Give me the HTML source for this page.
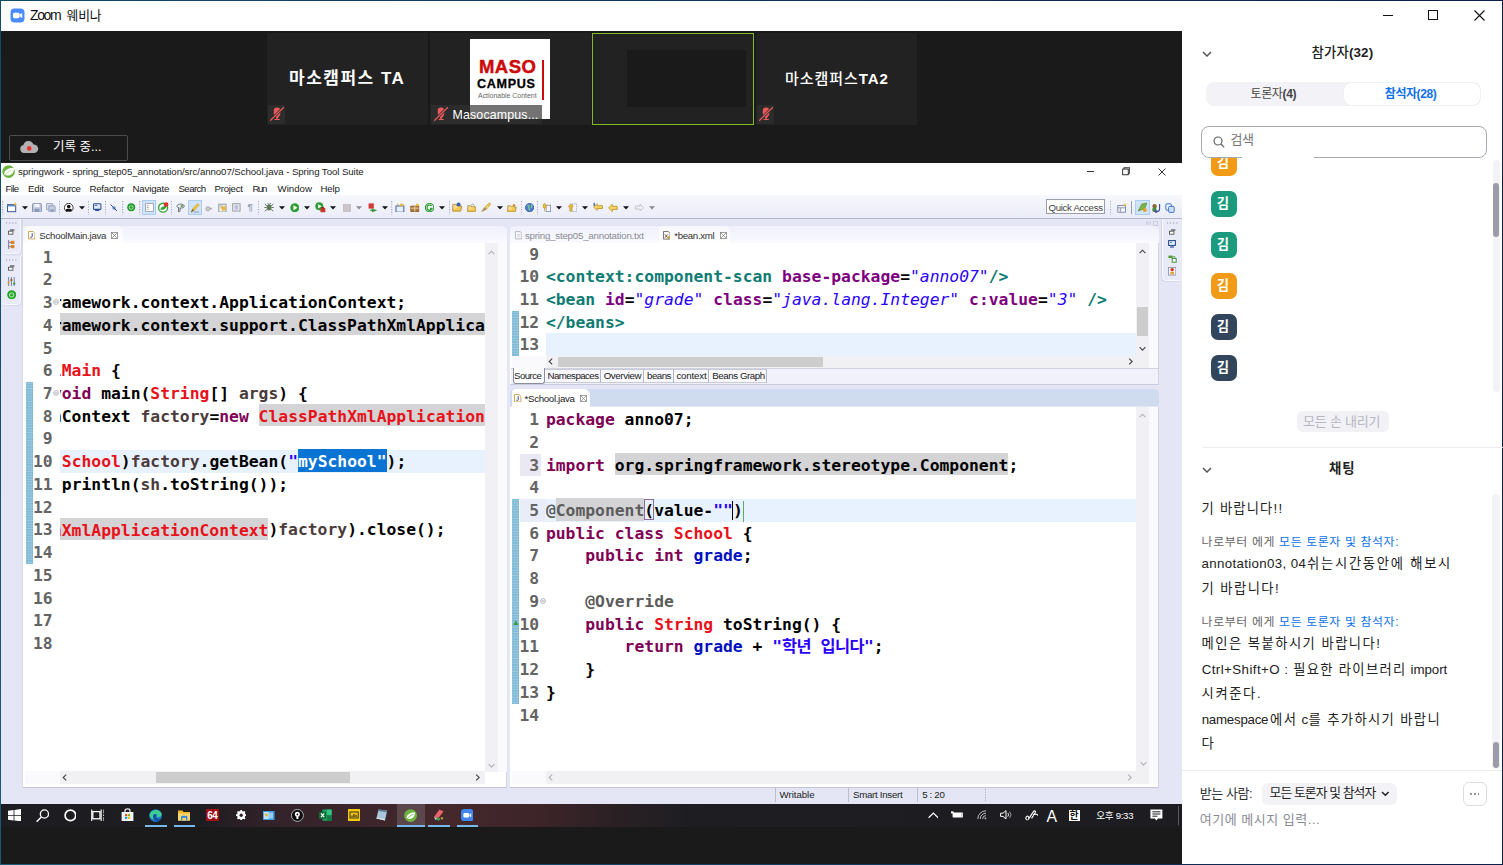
<!DOCTYPE html>
<html lang="ko">
<head>
<meta charset="utf-8">
<title>Zoom 웨비나</title>
<style>
*{box-sizing:border-box;margin:0;padding:0}
html,body{width:1503px;height:865px;overflow:hidden;background:#1a1a1a}
body{position:relative;font-family:"Liberation Sans","Noto Sans CJK KR",sans-serif;font-size:12px;color:#000}
.a{position:absolute}
.t{position:absolute;white-space:nowrap;line-height:1}
#titlebar{left:1px;top:1px;width:1501px;height:30px;background:#fff}
#strip{left:1px;top:31px;width:1181px;height:132px;background:#1a1a1a}
.tile{position:absolute;top:2px;height:92px;background:#222}
.tname{position:absolute;white-space:nowrap;color:#fff;font-weight:bold;line-height:1}
.ui{font-family:"Liberation Sans","Noto Sans CJK KR",sans-serif}
.code{font-family:"DejaVu Sans Mono","Liberation Mono","Noto Sans CJK KR",monospace;font-weight:bold;font-size:16.35px;white-space:pre;line-height:22.75px;position:absolute}
.ln{color:#646464}
.kw{color:#7f0055}
.rd{color:#e8111a}
.br{color:#4a3a3a}
.bl{color:#0010c0}
.st{color:#2a00ff}
.tg{color:#0e7c72}
.sti{color:#2a00ff;font-style:italic;font-weight:normal}
.bx{outline:1px solid #8a6a9a;outline-offset:-1px;padding:1.8px 0 0.2px}
.cur{box-shadow:-1px 0 0 #000}
.grn{display:inline-block;width:1px;height:21px;background:#5daa60;vertical-align:top;margin-top:1px}
.at{color:#7f007f}
.gy{color:#5c5c5c}
.ko{letter-spacing:-0.52px}
.hl{background:#d4d4d6;padding:2.8px 0 0.7px}
.selx{background:#0a74d4;color:#fff;padding:2.8px 0 0.7px}
</style>
</head>
<body>
<!-- outer frame -->
<div class="a" style="left:0;top:0;width:1503px;height:1px;background:linear-gradient(90deg,#134a66,#0b1f4a)"></div>
<div class="a" style="left:0;top:864px;width:1503px;height:1px;background:linear-gradient(90deg,#1b5b78,#0b1f4a)"></div>
<div class="a" style="left:0;top:0;width:1px;height:865px;background:linear-gradient(#134a66,#1b5b78)"></div>
<div class="a" style="left:1502px;top:0;width:1px;height:865px;background:#0b1f4a"></div>

<!-- ZOOM TITLE BAR -->
<div id="titlebar" class="a">
  <svg class="a" style="left:9px;top:7px" width="15" height="15" viewBox="0 0 15 15"><rect x="0.5" y="0.5" width="14" height="14" rx="4" fill="#4a8cff"/><rect x="3" y="4.8" width="6.6" height="5.4" rx="1.4" fill="#fff"/><path d="M9.9 6.6 L12.2 5.1 V9.9 L9.9 8.4Z" fill="#fff"/></svg>
  <div class="t" style="left:29px;top:7.2px;font-size:14px;color:#111;letter-spacing:-1.40px;">Zoom</div>
  <div class="t" style="left:65.6px;top:9.2px;font-size:12.8px;color:#111;letter-spacing:-0.16px;">웨비나</div>
  <div class="a" style="left:1382px;top:14px;width:10px;height:1px;background:#111"></div>
  <div class="a" style="left:1427px;top:9px;width:10px;height:10px;border:1px solid #111"></div>
  <svg class="a" style="left:1473px;top:9px" width="11" height="11" viewBox="0 0 11 11"><path d="M0.5 0.5 L10.5 10.5 M10.5 0.5 L0.5 10.5" stroke="#111" stroke-width="1.1" fill="none"/></svg>
</div>

<!-- VIDEO STRIP -->
<div id="strip" class="a">
  <div class="tile" style="left:266px;width:161px"><div class="tname" id="ta1" style="left:22px;top:37px;font-size:17px;letter-spacing:1.5px">마소캠퍼스 TA</div>
    <div class="a" style="left:1px;top:72px;width:17px;height:19px;background:#2c2c2c"></div><svg class="a" style="left:3px;top:73px" width="14" height="15" viewBox="0 0 14 15"><rect x="3.8" y="1.6" width="6.5" height="9" rx="3.2" fill="#ee5a5a"/><path d="M5 9.6 H9.2 L7.8 12.8 H6.3Z" fill="#ee5a5a"/><rect x="4.4" y="13" width="5.5" height="1.1" rx="0.5" fill="#ee5a5a"/><path d="M13.6 1.4 L0.5 14.4" stroke="#2c2c2c" stroke-width="2.8"/><path d="M13.9 1.1 L0.2 14.7" stroke="#ee5a5a" stroke-width="1.3"/></svg></div>
  <div class="tile" style="left:429px;width:161px">
    <div class="a" style="left:40px;top:6px;width:80px;height:80px;background:#fff">
      <div class="t" id="maso" style="-webkit-text-stroke:0.45px #cc0a0a;left:9px;top:19.3px;font-size:18.5px;font-weight:bold;color:#cc0a0a;letter-spacing:0.45px">MASO</div>
      <div class="t" id="campus" style="-webkit-text-stroke:0.3px #000;left:7px;top:39px;font-size:12.6px;font-weight:bold;color:#000;letter-spacing:0.65px">CAMPUS</div>
      <div class="t" id="actc" style="left:8px;top:54px;font-size:6.95px;color:#666">Actionable Content</div>
      <div class="a" style="left:72px;top:21px;width:2px;height:40px;background:#cc0a0a"></div>
    </div>
    <div class="a" style="left:1px;top:72px;width:39px;height:19px;background:#2c2c2c"></div>
    <div class="a" style="left:40px;top:72px;width:72px;height:14px;background:#737373"></div>
    <div class="a" style="left:40px;top:86px;width:72px;height:5px;background:#2c2c2c"></div><svg class="a" style="left:4px;top:73px" width="14" height="15" viewBox="0 0 14 15"><rect x="3.8" y="1.6" width="6.5" height="9" rx="3.2" fill="#ee5a5a"/><path d="M5 9.6 H9.2 L7.8 12.8 H6.3Z" fill="#ee5a5a"/><rect x="4.4" y="13" width="5.5" height="1.1" rx="0.5" fill="#ee5a5a"/><path d="M13.6 1.4 L0.5 14.4" stroke="#2c2c2c" stroke-width="2.8"/><path d="M13.9 1.1 L0.2 14.7" stroke="#ee5a5a" stroke-width="1.3"/></svg>
    <div class="t" id="masoc" style="left:22.5px;top:75.5px;font-size:12.4px;letter-spacing:0.15px;color:#fff">Masocampus...</div>
  </div>
  <div class="tile" style="left:591px;width:162px;border:1px solid #84b822"><div class="a" style="left:34px;top:16px;width:119px;height:57px;background:#1a1a1a"></div></div>
  <div class="tile" style="left:755px;width:161px"><div class="tname" id="ta2" style="left:29px;top:37.8px;font-size:15px;letter-spacing:0.95px"><span style="font-weight:500">마소캠퍼스</span>TA2</div>
    <div class="a" style="left:1px;top:72px;width:17px;height:19px;background:#2c2c2c"></div><svg class="a" style="left:3px;top:73px" width="14" height="15" viewBox="0 0 14 15"><rect x="3.8" y="1.6" width="6.5" height="9" rx="3.2" fill="#ee5a5a"/><path d="M5 9.6 H9.2 L7.8 12.8 H6.3Z" fill="#ee5a5a"/><rect x="4.4" y="13" width="5.5" height="1.1" rx="0.5" fill="#ee5a5a"/><path d="M13.6 1.4 L0.5 14.4" stroke="#2c2c2c" stroke-width="2.8"/><path d="M13.9 1.1 L0.2 14.7" stroke="#ee5a5a" stroke-width="1.3"/></svg></div>
  <div class="a" style="left:8px;top:104px;width:119px;height:26px;border:1px solid #4c4c4c;border-radius:2px">
    <svg class="a" style="left:9px;top:4px" width="20" height="14" viewBox="0 0 20 14"><path d="M5 13 a4 4 0 0 1 -.6 -7.9 a5.2 5.2 0 0 1 10 -0.6 a4.2 4.2 0 0 1 1 8.5z" fill="#b2b2b2"/><circle cx="10.2" cy="8.4" r="2.3" fill="#f0302c"/></svg>
    <div class="t" style="left:43px;top:5px;font-size:12.5px;color:#fff">기록 중...</div>
  </div>
</div>

<!-- ECLIPSE -->
<!--ECL-START-->
<div id="ecl" class="a" style="left:0;top:0;width:1182px;height:804px;overflow:hidden">
<div class="a" style="left:1px;top:163px;width:1181px;height:641px;background:#e4e6f6"></div>
<div class="a" style="left:1px;top:163px;width:1181px;height:32px;background:#fff"></div>
<svg class="a" style="left:1.8px;top:164.8px" width="13.2" height="13.2" viewBox="0 0 14 14"><circle cx="7" cy="7" r="6.7" fill="#6cb33e"/><path d="M2.4 10 C2 5.2 6.4 3.2 12.6 2.8 C13.4 8.4 9.4 12 3.8 11 Z" fill="#fff"/><path d="M2.8 11.2 C4.6 8.6 7 6.8 10.2 5.4" stroke="#9fd07c" stroke-width="0.7" fill="none"/></svg>
<div class="t" style="left:18px;top:167.2px;font-size:9.7px;color:#222;letter-spacing:-0.08px;">springwork - spring_step05_annotation/src/anno07/School.java - Spring Tool Suite</div>
<div class="a" style="left:1086.6px;top:171px;width:7.6px;height:1px;background:#333"></div>
<svg class="a" style="left:1121.6px;top:167.4px" width="8.4" height="8.4" viewBox="0 0 10 10"><path d="M2.5 2.5 V0.8 H9.2 V7.5 H7.5" fill="none" stroke="#333" stroke-width="1.2"/><rect x="0.8" y="2.5" width="6.7" height="6.7" fill="none" stroke="#333" stroke-width="1.2"/></svg>
<svg class="a" style="left:1158.4px;top:167.6px" width="8" height="8" viewBox="0 0 10 10"><path d="M0.7 0.7 L9.3 9.3 M9.3 0.7 L0.7 9.3" stroke="#333" stroke-width="1.25" fill="none"/></svg>
<div class="t" style="left:5.5px;top:184.3px;font-size:9.7px;color:#1a1a1a;letter-spacing:-0.64px;">File</div>
<div class="t" style="left:28px;top:184.3px;font-size:9.7px;color:#1a1a1a;letter-spacing:-0.23px;">Edit</div>
<div class="t" style="left:52.5px;top:184.3px;font-size:9.7px;color:#1a1a1a;letter-spacing:-0.44px;">Source</div>
<div class="t" style="left:89.5px;top:184.3px;font-size:9.7px;color:#1a1a1a;letter-spacing:-0.27px;">Refactor</div>
<div class="t" style="left:132.5px;top:184.3px;font-size:9.7px;color:#1a1a1a;letter-spacing:-0.18px;">Navigate</div>
<div class="t" style="left:178.5px;top:184.3px;font-size:9.7px;color:#1a1a1a;letter-spacing:-0.60px;">Search</div>
<div class="t" style="left:214.5px;top:184.3px;font-size:9.7px;color:#1a1a1a;letter-spacing:-0.28px;">Project</div>
<div class="t" style="left:252.5px;top:184.3px;font-size:9.7px;color:#1a1a1a;letter-spacing:-1.39px;">Run</div>
<div class="t" style="left:277.5px;top:184.3px;font-size:9.7px;color:#1a1a1a;letter-spacing:0.01px;">Window</div>
<div class="t" style="left:320.5px;top:184.3px;font-size:9.7px;color:#1a1a1a;letter-spacing:-0.15px;">Help</div>
<div class="a" style="left:1px;top:195px;width:1181px;height:23px;background:linear-gradient(#f7f8fd,#eaecf8)"></div>
<div class="a" style="left:1px;top:218px;width:1181px;height:1px;background:#b4b7c9"></div>
<svg class="a" style="left:2.2px;top:200.5px" width="1.4" height="14" viewBox="0 0 1.4 14"><path d="M0.7 0 V14" stroke="#9a9db5" stroke-width="1.2" stroke-dasharray="1.1 1.6"/></svg>
<svg class="a" style="left:58.8px;top:200.5px" width="1.4" height="14" viewBox="0 0 1.4 14"><path d="M0.7 0 V14" stroke="#9a9db5" stroke-width="1.2" stroke-dasharray="1.1 1.6"/></svg>
<svg class="a" style="left:87.7px;top:200.5px" width="1.4" height="14" viewBox="0 0 1.4 14"><path d="M0.7 0 V14" stroke="#9a9db5" stroke-width="1.2" stroke-dasharray="1.1 1.6"/></svg>
<svg class="a" style="left:104.7px;top:200.5px" width="1.4" height="14" viewBox="0 0 1.4 14"><path d="M0.7 0 V14" stroke="#9a9db5" stroke-width="1.2" stroke-dasharray="1.1 1.6"/></svg>
<svg class="a" style="left:122.4px;top:200.5px" width="1.4" height="14" viewBox="0 0 1.4 14"><path d="M0.7 0 V14" stroke="#9a9db5" stroke-width="1.2" stroke-dasharray="1.1 1.6"/></svg>
<svg class="a" style="left:139.3px;top:200.5px" width="1.4" height="14" viewBox="0 0 1.4 14"><path d="M0.7 0 V14" stroke="#9a9db5" stroke-width="1.2" stroke-dasharray="1.1 1.6"/></svg>
<svg class="a" style="left:171px;top:200.5px" width="1.4" height="14" viewBox="0 0 1.4 14"><path d="M0.7 0 V14" stroke="#9a9db5" stroke-width="1.2" stroke-dasharray="1.1 1.6"/></svg>
<svg class="a" style="left:258.1px;top:200.5px" width="1.4" height="14" viewBox="0 0 1.4 14"><path d="M0.7 0 V14" stroke="#9a9db5" stroke-width="1.2" stroke-dasharray="1.1 1.6"/></svg>
<svg class="a" style="left:391.2px;top:200.5px" width="1.4" height="14" viewBox="0 0 1.4 14"><path d="M0.7 0 V14" stroke="#9a9db5" stroke-width="1.2" stroke-dasharray="1.1 1.6"/></svg>
<svg class="a" style="left:448.5px;top:200.5px" width="1.4" height="14" viewBox="0 0 1.4 14"><path d="M0.7 0 V14" stroke="#9a9db5" stroke-width="1.2" stroke-dasharray="1.1 1.6"/></svg>
<svg class="a" style="left:520.5px;top:200.5px" width="1.4" height="14" viewBox="0 0 1.4 14"><path d="M0.7 0 V14" stroke="#9a9db5" stroke-width="1.2" stroke-dasharray="1.1 1.6"/></svg>
<svg class="a" style="left:536.7px;top:200.5px" width="1.4" height="14" viewBox="0 0 1.4 14"><path d="M0.7 0 V14" stroke="#9a9db5" stroke-width="1.2" stroke-dasharray="1.1 1.6"/></svg>
<svg class="a" style="left:21.5px;top:205.5px" width="6" height="4" viewBox="0 0 6 4"><path d="M0 0.3 H6 L3 3.6Z" fill="#111"/></svg>
<svg class="a" style="left:78.7px;top:205.5px" width="6" height="4" viewBox="0 0 6 4"><path d="M0 0.3 H6 L3 3.6Z" fill="#111"/></svg>
<svg class="a" style="left:278.7px;top:205.5px" width="6" height="4" viewBox="0 0 6 4"><path d="M0 0.3 H6 L3 3.6Z" fill="#111"/></svg>
<svg class="a" style="left:304.3px;top:205.5px" width="6" height="4" viewBox="0 0 6 4"><path d="M0 0.3 H6 L3 3.6Z" fill="#111"/></svg>
<svg class="a" style="left:330.3px;top:205.5px" width="6" height="4" viewBox="0 0 6 4"><path d="M0 0.3 H6 L3 3.6Z" fill="#111"/></svg>
<svg class="a" style="left:382.2px;top:205.5px" width="6" height="4" viewBox="0 0 6 4"><path d="M0 0.3 H6 L3 3.6Z" fill="#111"/></svg>
<svg class="a" style="left:439.2px;top:205.5px" width="6" height="4" viewBox="0 0 6 4"><path d="M0 0.3 H6 L3 3.6Z" fill="#111"/></svg>
<svg class="a" style="left:496.5px;top:205.5px" width="6" height="4" viewBox="0 0 6 4"><path d="M0 0.3 H6 L3 3.6Z" fill="#111"/></svg>
<svg class="a" style="left:556.4px;top:205.5px" width="6" height="4" viewBox="0 0 6 4"><path d="M0 0.3 H6 L3 3.6Z" fill="#111"/></svg>
<svg class="a" style="left:582.4px;top:205.5px" width="6" height="4" viewBox="0 0 6 4"><path d="M0 0.3 H6 L3 3.6Z" fill="#111"/></svg>
<svg class="a" style="left:622.7px;top:205.5px" width="6" height="4" viewBox="0 0 6 4"><path d="M0 0.3 H6 L3 3.6Z" fill="#111"/></svg>
<svg class="a" style="left:356.2px;top:205.5px" width="6" height="4" viewBox="0 0 6 4"><path d="M0 0.3 H6 L3 3.6Z" fill="#8a8a8a"/></svg>
<svg class="a" style="left:648.5px;top:205.5px" width="6" height="4" viewBox="0 0 6 4"><path d="M0 0.3 H6 L3 3.6Z" fill="#8a8a8a"/></svg>
<svg class="a" style="left:6.8px;top:202.4px" width="10.2" height="10.2" viewBox="0 0 10 10"><rect x="0.5" y="2.5" width="8" height="7" fill="#fff" stroke="#3d5c8c" stroke-width="1"/><rect x="0.5" y="2.5" width="8" height="1.8" fill="#5f86c4"/><path d="M8 0 L8.7 1.6 L10 2 L8.7 2.6 L8 4 L7.3 2.6 L6 2 L7.3 1.6Z" fill="#e8b730"/></svg>
<svg class="a" style="left:32px;top:202.55px" width="9.9" height="9.9" viewBox="0 0 10 10"><rect x="0.6" y="0.6" width="8.8" height="8.8" rx="0.8" fill="#c5cfe0" stroke="#7f8fb0" stroke-width="1"/><rect x="2.5" y="0.8" width="5" height="3.2" fill="#f4f6fa"/><rect x="2.5" y="5.8" width="5" height="3.4" fill="#8b9bb9"/></svg>
<svg class="a" style="left:46.4px;top:202.7px" width="9.6" height="9.6" viewBox="0 0 10 10"><rect x="0.5" y="0.5" width="6.5" height="6.5" rx="0.6" fill="#d3dae6" stroke="#93a0ba" stroke-width="0.9"/><rect x="3" y="3" width="6.5" height="6.5" rx="0.6" fill="#c5cfe0" stroke="#8d9bb8" stroke-width="0.9"/><rect x="4.6" y="6.6" width="3.4" height="2.6" fill="#8b9bb9"/></svg>
<svg class="a" style="left:64px;top:202.75px" width="9.5" height="9.5" viewBox="0 0 10 10"><circle cx="5" cy="5" r="4.6" fill="#fff" stroke="#222" stroke-width="0.9"/><circle cx="5" cy="3.7" r="1.9" fill="#111"/><path d="M1.4 7.6 C2.2 5.6 7.8 5.6 8.6 7.6 C7.6 9.3 2.4 9.3 1.4 7.6Z" fill="#111"/></svg>
<svg class="a" style="left:93.2px;top:203.3px" width="8.4" height="8.4" viewBox="0 0 10 10"><rect x="0.6" y="0.8" width="8.8" height="6.8" rx="0.8" fill="#dfe8f6" stroke="#2b4f94" stroke-width="1.2"/><rect x="2" y="2.2" width="3" height="1" fill="#2b4f94"/><rect x="2.5" y="8.4" width="5" height="1.2" fill="#2b4f94"/></svg>
<svg class="a" style="left:110.4px;top:203.7px" width="7.6" height="7.6" viewBox="0 0 10 10"><circle cx="5.4" cy="5.4" r="2.3" fill="#7b94c4"/><path d="M0.8 0.8 L9.2 9.2" stroke="#2b4f94" stroke-width="1.3"/></svg>
<svg class="a" style="left:127.4px;top:203.3px" width="8.4" height="8.4" viewBox="0 0 10 10"><circle cx="5" cy="5" r="4.7" fill="#1e9a26"/><circle cx="5" cy="5.3" r="2.3" fill="none" stroke="#d6f5d0" stroke-width="1"/><rect x="4.5" y="1.8" width="1" height="3.2" fill="#d6f5d0" stroke="#1e9a26" stroke-width="0.5"/></svg>
<div class="a" style="left:142px;top:200px;width:13.8px;height:15px;background:#cfe3fa;border:1px solid #a9cdf3"></div>
<svg class="a" style="left:144.5px;top:203px" width="9" height="9" viewBox="0 0 10 10"><rect x="0.7" y="0.7" width="8.6" height="8.6" fill="#fff" stroke="#9a9a9a" stroke-width="0.9"/><path d="M2 3 H4 M2 5 H4 M2 7 H4" stroke="#8a8a8a" stroke-width="0.8"/></svg>
<svg class="a" style="left:158px;top:202.2px" width="10.6" height="10.6" viewBox="0 0 10 10"><circle cx="4.8" cy="5.4" r="4.2" fill="#fff" stroke="#38a33a" stroke-width="1.3"/><path d="M2 7 C3 4.5 5.5 3.6 8 3.8 C7.8 6.4 5.4 8.2 2 7Z" fill="#38a33a"/><circle cx="7.6" cy="2.4" r="2.2" fill="#e03222"/></svg>
<svg class="a" style="left:176px;top:202.9px" width="9.2" height="9.2" viewBox="0 0 10 10"><path d="M1 3.4 C1.5 1.2 5.5 0.4 8.4 2.2 C9.6 3.4 8.6 5.2 7 5.4 L4.6 5.4 L4.2 9.4 L2.6 9.4 L3 5 C1.6 4.8 1 4.2 1 3.4Z" fill="#e9edf5" stroke="#4c5668" stroke-width="0.9"/><circle cx="6.4" cy="3.2" r="1.3" fill="#6aa84f"/></svg>
<div class="a" style="left:187.8px;top:200px;width:14px;height:15px;background:#cfe3fa;border:1px solid #a9cdf3"></div>
<svg class="a" style="left:190px;top:202.5px" width="10" height="10" viewBox="0 0 10 10"><path d="M1 9.4 L2.6 5.8 L7.8 0.6 L9.2 2 L4.2 7.6Z" fill="#f2c330" stroke="#c9961a" stroke-width="0.5"/><path d="M1 9.4 L2.6 5.8 L4.2 7.6Z" fill="#7a6a4a"/><path d="M4 9 H9" stroke="#8aa0c8" stroke-width="1"/></svg>
<svg class="a" style="left:204.8px;top:203.5px" width="8" height="8" viewBox="0 0 10 10"><circle cx="3.6" cy="6" r="2.6" fill="#c9c9c9" stroke="#9a9a9a" stroke-width="0.8"/><path d="M6 4 L9.4 5.6 L6.4 7.4Z" fill="#a8a8a8"/></svg>
<svg class="a" style="left:217.6px;top:202.6px" width="9.8" height="9.8" viewBox="0 0 10 10"><rect x="0.8" y="1.2" width="7.4" height="8" fill="#f1f1f1" stroke="#8d8d8d" stroke-width="0.9"/><path d="M3 4 L7 3 L8.6 6.8 L4.4 8Z" fill="#e6b73a"/><path d="M2 3 H5 M2 5 H3" stroke="#999" stroke-width="0.7"/></svg>
<svg class="a" style="left:232.4px;top:203.1px" width="8.8" height="8.8" viewBox="0 0 10 10"><rect x="0.8" y="0.8" width="8.4" height="8.4" fill="#e7e7ee" stroke="#8d8d96" stroke-width="0.9"/><rect x="3" y="2.4" width="4" height="5" fill="#b9c4dc"/></svg>
<div class="t" style="left:247.6px;top:202px;font-size:9.5px;color:#9aa0b4;font-weight:bold;letter-spacing:0.20px;">¶</div>
<svg class="a" style="left:263.6px;top:202.4px" width="10.2" height="10.2" viewBox="0 0 10 10"><ellipse cx="5" cy="5.4" rx="2.3" ry="3" fill="#5c7a52"/><path d="M0.8 2 L3 3.8 M9.2 2 L7 3.8 M0.4 5.4 H2.6 M9.6 5.4 H7.4 M0.8 9 L3 7.2 M9.2 9 L7 7.2 M3.6 1 L4.4 2.6 M6.4 1 L5.6 2.6" stroke="#445a40" stroke-width="0.8"/></svg>
<svg class="a" style="left:289.6px;top:202.7px" width="9.6" height="9.6" viewBox="0 0 10 10"><circle cx="5" cy="5" r="4.7" fill="#2f9e36"/><path d="M3.6 2.4 L7.8 5 L3.6 7.6Z" fill="#fff"/></svg>
<svg class="a" style="left:315px;top:202.1px" width="10.8" height="10.8" viewBox="0 0 10 10"><circle cx="4" cy="4" r="3.7" fill="#2f9e36"/><path d="M2.9 2 L6.2 4 L2.9 6Z" fill="#fff"/><rect x="5" y="5.6" width="4.6" height="3.8" rx="0.5" fill="#c53a2a"/><rect x="6" y="4.6" width="2.4" height="1.4" fill="#8a2a20"/></svg>
<svg class="a" style="left:342.6px;top:203.5px" width="8" height="8" viewBox="0 0 10 10"><rect x="0.8" y="0.8" width="8.4" height="8.4" fill="#cfc4c8" stroke="#b8aeb4" stroke-width="0.8"/></svg>
<svg class="a" style="left:367.5px;top:202.65px" width="9.7" height="9.7" viewBox="0 0 10 10"><rect x="0.6" y="0.4" width="5.4" height="5.4" fill="#d23a34"/><path d="M4.2 5.8 L9.4 7.6 L4.2 9.6Z" fill="#3a9a3c"/><rect x="2.4" y="6.8" width="2.6" height="1.6" fill="#3a9a3c"/></svg>
<svg class="a" style="left:395px;top:202.6px" width="9.8" height="9.8" viewBox="0 0 10 10"><rect x="1" y="3" width="8" height="6.4" fill="#e8eef8" stroke="#3a62a8" stroke-width="1"/><path d="M2.6 0.6 L4 3 M6 0.4 L6 3 M8.6 1 L7.4 3" stroke="#d9a520" stroke-width="0.9"/><circle cx="7" cy="2.4" r="1.4" fill="#e8b730"/></svg>
<svg class="a" style="left:410px;top:202.7px" width="9.6" height="9.6" viewBox="0 0 10 10"><rect x="0.8" y="3.2" width="8.4" height="5.8" fill="#b07a3a" stroke="#7a4e1c" stroke-width="0.7"/><path d="M0.8 5.4 H9.2 M5 3.2 V9" stroke="#f0d9a8" stroke-width="0.9"/><circle cx="7.6" cy="2.2" r="1.5" fill="#e8b730"/></svg>
<svg class="a" style="left:425.2px;top:202.9px" width="9.2" height="9.2" viewBox="0 0 10 10"><circle cx="5" cy="5" r="4.6" fill="#fff" stroke="#2f9e36" stroke-width="1.2"/><path d="M7.2 3.4 A2.8 2.8 0 1 0 7.6 6 H5.4" fill="none" stroke="#2f9e36" stroke-width="1.4"/></svg>
<svg class="a" style="left:452.4px;top:202.4px" width="10.2" height="10.2" viewBox="0 0 10 10"><path d="M0.6 9 L1.4 4 H9.6 L8.6 9Z" fill="#f0c550" stroke="#a87f1c" stroke-width="0.7"/><path d="M0.8 8 V2.4 H3.6 L4.4 3.4 H8.2 V4" fill="#f7dc8a" stroke="#a87f1c" stroke-width="0.7"/><circle cx="6.4" cy="2.4" r="2" fill="#3c5cb0"/></svg>
<svg class="a" style="left:466.6px;top:202.7px" width="9.6" height="9.6" viewBox="0 0 10 10"><path d="M0.6 9 L1.4 4.4 H9.6 L8.6 9Z" fill="#f0c550" stroke="#a87f1c" stroke-width="0.7"/><path d="M0.8 8 V2.8 H3.6 L4.4 3.8 H8.2 V4.4" fill="#f7dc8a" stroke="#a87f1c" stroke-width="0.7"/><path d="M4 2.6 L6 1 L8 2.6" fill="none" stroke="#8a8a8a" stroke-width="0.8"/></svg>
<svg class="a" style="left:481px;top:202.3px" width="10.4" height="10.4" viewBox="0 0 10 10"><path d="M0.8 9.2 L3.4 5.2 L8.2 0.8 L9.4 2.2 L5.2 7Z" fill="#f0c550" stroke="#b98f22" stroke-width="0.6"/><path d="M0.8 9.2 L3.4 5.2 L5.2 7Z" fill="#9c8c6a"/><path d="M5.4 4 L7 5.6" stroke="#fff" stroke-width="0.8"/></svg>
<svg class="a" style="left:507.3px;top:202.65px" width="9.7" height="9.7" viewBox="0 0 10 10"><path d="M0.6 9 L1.4 4.4 H9.6 L8.6 9Z" fill="#f0c550" stroke="#a87f1c" stroke-width="0.7"/><path d="M0.8 8 V2.8 H3.6 L4.4 3.8 H8.2 V4.4" fill="#f7dc8a" stroke="#a87f1c" stroke-width="0.7"/><path d="M5.4 2.6 L7.2 0.8 L9 2.6 L7.2 3.6Z" fill="#d98a2a"/></svg>
<svg class="a" style="left:524.8px;top:202.9px" width="9.2" height="9.2" viewBox="0 0 10 10"><circle cx="5" cy="5" r="4.5" fill="#4a7fd0" stroke="#27498a" stroke-width="0.8"/><path d="M2.4 3 C4 2 5 3.6 4.2 5 C3.6 6.2 5.4 6.6 5 8.4 M6.6 2 C8 3 7.6 4.6 6.6 5" stroke="#8fd08a" stroke-width="1.3" fill="none"/></svg>
<svg class="a" style="left:542.2px;top:202.9px" width="9.2" height="9.2" viewBox="0 0 10 10"><rect x="4.4" y="2.4" width="5" height="7" fill="#f4f4f8" stroke="#7d86a0" stroke-width="0.8"/><path d="M2.8 0.6 C4.6 0.6 4.6 4 3.8 5.4 H1.8 C1 4 1 0.6 2.8 0.6Z M2.8 5.4 V9" fill="#f2c330" stroke="#b98f22" stroke-width="0.7"/></svg>
<svg class="a" style="left:567.7px;top:202.9px" width="9.2" height="9.2" viewBox="0 0 10 10"><rect x="4.6" y="1" width="4.8" height="8.4" fill="#f4f4f8" stroke="#7d86a0" stroke-width="0.8" stroke-dasharray="1 0.8"/><path d="M3 0.8 L5.6 4 H4 V9 H2 V4 H0.4Z" fill="#f2c330" stroke="#b98f22" stroke-width="0.7"/></svg>
<svg class="a" style="left:592.6px;top:202.4px" width="10.2" height="10.2" viewBox="0 0 10 10"><path d="M4 1.6 L0.6 5 L4 8.4 V6.4 H9.4 V3.6 H4Z" fill="#f7d560" stroke="#b98f22" stroke-width="0.8"/><path d="M1.2 0.8 V4" stroke="#3c5cb0" stroke-width="1.2"/></svg>
<svg class="a" style="left:607.8px;top:202.6px" width="9.8" height="9.8" viewBox="0 0 10 10"><path d="M4.4 1.2 L0.6 5 L4.4 8.8 V6.6 H9.4 V3.4 H4.4Z" fill="#f7d560" stroke="#b98f22" stroke-width="0.8"/></svg>
<svg class="a" style="left:634.5px;top:202.9px" width="9.2" height="9.2" viewBox="0 0 10 10"><path d="M5.6 1.2 L9.4 5 L5.6 8.8 V6.6 H0.6 V3.4 H5.6Z" fill="#f1f1f4" stroke="#b6b6c0" stroke-width="0.8"/></svg>
<div class="a" style="left:1046px;top:199px;width:59px;height:15px;background:#fff;border:1px solid #9a9caf"></div>
<div class="t" style="left:1048.5px;top:203.4px;font-size:9.7px;color:#444;letter-spacing:-0.33px;">Quick Access</div>
<svg class="a" style="left:1110px;top:200.5px" width="1.4" height="14" viewBox="0 0 1.4 14"><path d="M0.7 0 V14" stroke="#9a9db5" stroke-width="1.2" stroke-dasharray="1.1 1.6"/></svg>
<svg class="a" style="left:1117px;top:202.5px" width="10" height="10" viewBox="0 0 10 10"><rect x="0.8" y="2.6" width="7.6" height="6.6" fill="#f3f5fa" stroke="#6b7896" stroke-width="0.8"/><path d="M0.8 4.8 H8.4 M3.4 4.8 V9.2" stroke="#6b7896" stroke-width="0.7"/><path d="M8 0 L8.6 1.5 L10 2 L8.6 2.5 L8 4 L7.4 2.5 L6 2 L7.4 1.5Z" fill="#e8b730"/></svg>
<div class="a" style="left:1130.5px;top:201px;width:1px;height:13px;background:#9a9db5"></div>
<div class="a" style="left:1134.5px;top:200px;width:15px;height:15px;background:#cfe3fa;border:1px solid #a9cdf3"></div>
<svg class="a" style="left:1137px;top:202.25px" width="10.5" height="10.5" viewBox="0 0 10 10"><path d="M1 8.6 L4.6 2 L9.4 1 L7.4 6.4Z" fill="#7ab648" stroke="#4e8a2a" stroke-width="0.6"/><circle cx="7.4" cy="7.6" r="1.9" fill="#e8a030"/></svg>
<svg class="a" style="left:1151px;top:202.5px" width="10" height="10" viewBox="0 0 10 10"><circle cx="3.6" cy="3.2" r="2.2" fill="#8a6a3a"/><circle cx="3.4" cy="6.8" r="2.2" fill="#3f8f3f"/><path d="M8.6 1 V6 C8.6 8 6.6 8.6 5.6 8.6" stroke="#2b4f94" stroke-width="1.1" fill="none"/><circle cx="5" cy="8.6" r="1.4" fill="#6a3fa0"/></svg>
<svg class="a" style="left:1164.5px;top:202.5px" width="10" height="10" viewBox="0 0 10 10"><rect x="0.8" y="0.8" width="5.6" height="6.4" rx="1.2" fill="#eaf1fb" stroke="#3f78c8" stroke-width="1"/><rect x="3.6" y="3.4" width="5.6" height="6" rx="1.2" fill="#cfe0f6" stroke="#3f78c8" stroke-width="1"/></svg>
<div class="a" style="left:2px;top:219px;width:19px;height:35px;background:#e8eaf8;border-right:1px solid #f8f9fd;border-bottom:1px solid #f8f9fd;border-radius:0 0 4px 4px;box-shadow:0.5px 0.5px 0 #c4c7dc"></div>
<div class="a" style="left:2px;top:255.5px;width:19px;height:49px;background:#e8eaf8;border-right:1px solid #f8f9fd;border-bottom:1px solid #f8f9fd;border-radius:0 0 4px 4px;box-shadow:0.5px 0.5px 0 #c4c7dc"></div>
<svg class="a" style="left:6px;top:222px" width="11" height="2" viewBox="0 0 11 2"><path d="M0 1 H11" stroke="#8e93ad" stroke-width="1.1" stroke-dasharray="1.1 2"/></svg>
<svg class="a" style="left:7.6px;top:228.6px" width="7" height="6" viewBox="0 0 7 6"><rect x="0.5" y="2.2" width="4.4" height="3" fill="#fff" stroke="#555" stroke-width="0.9"/><path d="M2 1 H6.4" stroke="#555" stroke-width="1.3"/></svg>
<svg class="a" style="left:8px;top:240px" width="7" height="9" viewBox="0 0 7 9"><path d="M0.6 0 V9 M0.6 2.4 H3 M0.6 6.6 H3" stroke="#6b7896" stroke-width="0.9" fill="none"/><rect x="2.8" y="0.8" width="3.6" height="3.2" fill="#d98324"/><rect x="2.8" y="5" width="3.6" height="3.2" fill="#d98324"/></svg>
<svg class="a" style="left:6px;top:258.5px" width="11" height="2" viewBox="0 0 11 2"><path d="M0 1 H11" stroke="#8e93ad" stroke-width="1.1" stroke-dasharray="1.1 2"/></svg>
<svg class="a" style="left:7.6px;top:265px" width="7" height="6" viewBox="0 0 7 6"><rect x="0.5" y="2.2" width="4.4" height="3" fill="#fff" stroke="#555" stroke-width="0.9"/><path d="M2 1 H6.4" stroke="#555" stroke-width="1.3"/></svg>
<svg class="a" style="left:7px;top:276.5px" width="9" height="9" viewBox="0 0 9 9"><path d="M1.6 0 V9 M4.4 0 V9 M7.2 0 V9" stroke="#4a6a9a" stroke-width="0.8"/><rect x="0.6" y="4.6" width="2" height="2" fill="#d9a520"/><rect x="3.4" y="2" width="2" height="2" fill="#c05a2a"/><rect x="6.2" y="5.6" width="2" height="2" fill="#3f8f3f"/></svg>
<svg class="a" style="left:6.6px;top:289.6px" width="9.4" height="9.4" viewBox="0 0 10 10"><circle cx="5" cy="5" r="4.8" fill="#22a32a"/><circle cx="5" cy="5.3" r="2.3" fill="none" stroke="#d6f5d0" stroke-width="1"/><rect x="4.5" y="1.8" width="1" height="3.2" fill="#d6f5d0" stroke="#22a32a" stroke-width="0.5"/></svg>
<div class="a" style="left:22px;top:219px;width:1px;height:569px;background:#d8d9e6"></div>
<div class="a" style="left:23px;top:226px;width:484px;height:17.8px;background:linear-gradient(#eff0fa,#fafaff);border-radius:0 5px 0 0"></div>
<div class="a" style="left:24.5px;top:226px;width:98px;height:17.8px;background:linear-gradient(#f8f8fd,#fff);border-radius:4px 6px 0 0"></div>
<div class="a" style="left:23px;top:242.5px;width:484px;height:545.3px;background:#fff;border-right:1px solid #d2d4e6;border-bottom:1px solid #c3c5d4"></div>
<svg class="a" style="left:28px;top:231.4px" width="7.4" height="8.4" viewBox="0 0 7.4 8.4"><path d="M0.5 0.5 H5 L6.9 2.4 V7.9 H0.5Z" fill="#fff" stroke="#c9a24a" stroke-width="0.9"/><path d="M4.2 2.2 V5.4 C4.2 6.6 2.8 6.6 2.2 6" fill="none" stroke="#3a4a9a" stroke-width="1"/></svg>
<div class="t" style="left:39.3px;top:231px;font-size:9.7px;color:#333;letter-spacing:-0.28px;">SchoolMain.java</div>
<svg class="a" style="left:111px;top:232.4px" width="7" height="7" viewBox="0 0 7 7"><rect x="0.5" y="0.5" width="6" height="6" fill="none" stroke="#7a7a7a" stroke-width="0.7"/><path d="M0.5 0.5 L6.5 6.5 M6.5 0.5 L0.5 6.5" stroke="#7a7a7a" stroke-width="0.7"/></svg>
<div class="a" style="left:24.5px;top:244px;width:460.5px;height:527.2px;overflow:hidden;background:#fff">
<div class="a" style="left:35px;top:206.17px;width:425.5px;height:22.73px;background:#e8f2fe"></div>
<div class="a" style="left:1px;top:137.98px;width:7.3px;height:181.84px;background:#86bdd8;background-image:repeating-conic-gradient(#74b3d2 0 25%,#9dcbe0 0 50%);background-size:2.6px 2.6px"></div>
<div class="code ln" style="left:-1.429px;top:2.6px;width:29.529px;text-align:right">1</div>
<div class="code ln" style="left:-1.429px;top:25.33px;width:29.529px;text-align:right">2</div>
<div class="code ln" style="left:-1.429px;top:48.06px;width:29.529px;text-align:right">3</div>
<div class="code ln" style="left:-1.429px;top:70.79px;width:29.529px;text-align:right">4</div>
<div class="code ln" style="left:-1.429px;top:93.52px;width:29.529px;text-align:right">5</div>
<div class="code ln" style="left:-1.429px;top:116.25px;width:29.529px;text-align:right">6</div>
<div class="code ln" style="left:-1.429px;top:138.98px;width:29.529px;text-align:right">7</div>
<div class="code ln" style="left:-1.429px;top:161.71px;width:29.529px;text-align:right">8</div>
<div class="code ln" style="left:-1.429px;top:184.44px;width:29.529px;text-align:right">9</div>
<div class="code ln" style="left:-1.429px;top:207.17px;width:29.529px;text-align:right">10</div>
<div class="code ln" style="left:-1.429px;top:229.9px;width:29.529px;text-align:right">11</div>
<div class="code ln" style="left:-1.429px;top:252.63px;width:29.529px;text-align:right">12</div>
<div class="code ln" style="left:-1.429px;top:275.36px;width:29.529px;text-align:right">13</div>
<div class="code ln" style="left:-1.429px;top:298.09px;width:29.529px;text-align:right">14</div>
<div class="code ln" style="left:-1.429px;top:320.82px;width:29.529px;text-align:right">15</div>
<div class="code ln" style="left:-1.429px;top:343.55px;width:29.529px;text-align:right">16</div>
<div class="code ln" style="left:-1.429px;top:366.28px;width:29.529px;text-align:right">17</div>
<div class="code ln" style="left:-1.429px;top:389.01px;width:29.529px;text-align:right">18</div>
<svg class="a" style="left:28.4px;top:55.06px" width="6" height="6" viewBox="0 0 6 6"><circle cx="3" cy="3" r="2.4" fill="#fff" stroke="#9a9aa8" stroke-width="0.7"/><path d="M1.6 3 H4.4" stroke="#777" stroke-width="0.7"/></svg>
<svg class="a" style="left:28.4px;top:145.98px" width="6" height="6" viewBox="0 0 6 6"><circle cx="3" cy="3" r="2.4" fill="#fff" stroke="#9a9aa8" stroke-width="0.7"/><path d="M1.6 3 H4.4" stroke="#777" stroke-width="0.7"/></svg>
<div class="a" id="clip24" style="left:35px;top:0;width:425.5px;height:527.2px;overflow:hidden">
<div class="code" style="left:-184.7px;top:48.06px"><span class="kw">import</span> org.springframework.context.ApplicationContext;</div>
<div class="code" style="left:-184.7px;top:70.79px"><span class="hl">import org.springframework.context.support.ClassPathXmlApplicationContext;</span></div>
<div class="code" style="left:-184.7px;top:116.25px"><span class="kw">public class </span><span class="rd">SchoolMain</span> {</div>
<div class="code" style="left:-184.7px;top:138.98px">    <span class="kw">public static void</span> main(<span class="rd">String</span>[] <span class="br">args</span>) {</div>
<div class="code" style="left:-184.7px;top:161.71px">        ApplicationContext <span class="br">factory</span>=<span class="kw">new</span> <span class="rd hl">ClassPathXmlApplicationContext</span>(<span class="st">"anno07/bean.xml"</span>);</div>
<div class="code" style="left:-184.7px;top:207.17px">        <span class="rd">School</span> <span class="br">sh</span>=(<span class="rd">School</span>)<span class="br">factory</span>.getBean(<span class="st">"</span><span class="selx">mySchool"</span>);</div>
<div class="code" style="left:-184.7px;top:229.9px">        System.<span class="bl">out</span>.println(<span class="br">sh</span>.toString());</div>
<div class="code" style="left:-184.7px;top:275.36px">        ((<span class="rd hl">ClassPathXmlApplicationContext</span>)<span class="br">factory</span>).close();</div>
</div>
</div>
<div class="a" style="left:485px;top:242.5px;width:12.5px;height:529px;background:#f1f1f5"></div>
<svg class="a" style="left:487.8px;top:249.8px" width="7" height="5.4" viewBox="0 0 7 5.4"><path d="M0.6 4.2 L3.5 1.2 L6.4 4.2" fill="none" stroke="#b0b0b8" stroke-width="1.1"/></svg>
<svg class="a" style="left:487.8px;top:763px" width="7" height="5.4" viewBox="0 0 7 5.4"><path d="M0.6 1.2 L3.5 4.2 L6.4 1.2" fill="none" stroke="#b0b0b8" stroke-width="1.1"/></svg>
<div class="a" style="left:497.5px;top:242.5px;width:9px;height:529px;background:#fafafd"></div>
<div class="a" style="left:24.5px;top:771.2px;width:35px;height:13px;background:#faf9fb"></div>
<div class="a" style="left:59.5px;top:771.2px;width:425.5px;height:13px;background:#f1f1f4"></div>
<svg class="a" style="left:61.6px;top:774.2px" width="5.4" height="7" viewBox="0 0 5.4 7"><path d="M4.2 0.6 L1.2 3.5 L4.2 6.4" fill="none" stroke="#444" stroke-width="1.1"/></svg>
<svg class="a" style="left:475px;top:774.2px" width="5.4" height="7" viewBox="0 0 5.4 7"><path d="M1.2 0.6 L4.2 3.5 L1.2 6.4" fill="none" stroke="#444" stroke-width="1.1"/></svg>
<div class="a" style="left:156px;top:772.2px;width:194px;height:11px;background:#cdcdcd"></div>
<div class="a" style="left:510px;top:226px;width:649.2px;height:17.8px;background:linear-gradient(#eff0fa,#fafaff);border-radius:5px 5px 0 0"></div>
<div class="a" style="left:659px;top:226px;width:70.5px;height:17.8px;background:linear-gradient(#f8f8fd,#fff);border-radius:4px 6px 0 0"></div>
<div class="a" style="left:510px;top:242.5px;width:649.2px;height:142.5px;background:#fff;border-right:1px solid #d2d4e6;border-bottom:1px solid #c9cbdc"></div>
<svg class="a" style="left:514.5px;top:231.4px" width="7.4" height="8.4" viewBox="0 0 7.4 8.4"><path d="M0.5 0.5 H5 L6.9 2.4 V7.9 H0.5Z" fill="#f4f4f7" stroke="#b5b5c0" stroke-width="0.9"/><path d="M2 3.5 H5.4 M2 5.2 H5.4" stroke="#c5c5d0" stroke-width="0.7"/></svg>
<div class="t" style="left:524.9px;top:231px;font-size:9.7px;color:#8a8a92;letter-spacing:-0.20px;">spring_step05_annotation.txt</div>
<svg class="a" style="left:662.6px;top:231.2px" width="7.6" height="8.6" viewBox="0 0 7.6 8.6"><path d="M0.5 0.5 H5.2 L7.1 2.4 V8.1 H0.5Z" fill="#fff" stroke="#6a6a6a" stroke-width="0.9"/><path d="M1.8 3.4 L4.8 6.8 M4.8 3.4 L1.8 6.8" stroke="#7a5a3a" stroke-width="1"/><circle cx="5.6" cy="6.6" r="1.5" fill="#c9a24a"/></svg>
<div class="t" style="left:674.2px;top:231px;font-size:9.7px;color:#333;letter-spacing:-0.32px;">*bean.xml</div>
<svg class="a" style="left:719.6px;top:232.4px" width="7" height="7" viewBox="0 0 7 7"><rect x="0.5" y="0.5" width="6" height="6" fill="none" stroke="#7a7a7a" stroke-width="0.7"/><path d="M0.5 0.5 L6.5 6.5 M6.5 0.5 L0.5 6.5" stroke="#7a7a7a" stroke-width="0.7"/></svg>
<div class="a" style="left:512px;top:244px;width:624px;height:111.5px;overflow:hidden;background:#fff">
<div class="a" style="left:33.6px;top:89.42px;width:590.4px;height:22.73px;background:#e8f2fe"></div>
<div class="a" style="left:0px;top:66.69px;width:7px;height:45.46px;background:#86bdd8;background-image:repeating-conic-gradient(#74b3d2 0 25%,#9dcbe0 0 50%);background-size:2.6px 2.6px"></div>
<div class="code ln" style="left:-2.329px;top:-0.5px;width:29.529px;text-align:right">9</div>
<div class="code ln" style="left:-2.329px;top:22.23px;width:29.529px;text-align:right">10</div>
<div class="code ln" style="left:-2.329px;top:44.96px;width:29.529px;text-align:right">11</div>
<div class="code ln" style="left:-2.329px;top:67.69px;width:29.529px;text-align:right">12</div>
<div class="code ln" style="left:-2.329px;top:90.42px;width:29.529px;text-align:right">13</div>
<div class="a" id="clip512" style="left:33.6px;top:0;width:590.4px;height:111.5px;overflow:hidden">
<div class="code" style="left:0.3px;top:22.23px"><span class="tg">&lt;context:component-scan </span><span class="at">base-package</span>=<span class="sti">"anno07"</span><span class="tg">/&gt;</span></div>
<div class="code" style="left:0.3px;top:44.96px"><span class="tg">&lt;bean </span><span class="at">id</span>=<span class="sti">"grade"</span> <span class="at">class</span>=<span class="sti">"java.lang.Integer"</span> <span class="at">c:value</span>=<span class="sti">"3"</span> <span class="tg">/&gt;</span></div>
<div class="code" style="left:0.3px;top:67.69px"><span class="tg">&lt;/beans&gt;</span></div>
</div>
</div>
<div class="a" style="left:1136px;top:242.5px;width:13px;height:113px;background:#f1f1f5"></div>
<svg class="a" style="left:1139px;top:248.6px" width="7" height="5.4" viewBox="0 0 7 5.4"><path d="M0.6 4.2 L3.5 1.2 L6.4 4.2" fill="none" stroke="#444" stroke-width="1.1"/></svg>
<svg class="a" style="left:1139px;top:346px" width="7" height="5.4" viewBox="0 0 7 5.4"><path d="M0.6 1.2 L3.5 4.2 L6.4 1.2" fill="none" stroke="#444" stroke-width="1.1"/></svg>
<div class="a" style="left:1137px;top:307px;width:11px;height:29px;background:#cdcdcd"></div>
<div class="a" style="left:1149px;top:242.5px;width:9.4px;height:125.8px;background:#fafafd"></div>
<div class="a" style="left:512px;top:355.5px;width:34px;height:12.8px;background:#faf9fb"></div>
<div class="a" style="left:546px;top:355.5px;width:603px;height:12.8px;background:#f1f1f4"></div>
<svg class="a" style="left:548.4px;top:358.4px" width="5.4" height="7" viewBox="0 0 5.4 7"><path d="M4.2 0.6 L1.2 3.5 L4.2 6.4" fill="none" stroke="#444" stroke-width="1.1"/></svg>
<svg class="a" style="left:1127.5px;top:358.4px" width="5.4" height="7" viewBox="0 0 5.4 7"><path d="M1.2 0.6 L4.2 3.5 L1.2 6.4" fill="none" stroke="#444" stroke-width="1.1"/></svg>
<div class="a" style="left:558px;top:356.5px;width:264.6px;height:10.8px;background:#cdcdcd"></div>
<div class="a" style="left:511px;top:368.3px;width:647.2px;height:15.7px;background:#f0f1fa;border-top:1px solid #d0d2e2"></div>
<div class="a" style="left:512.5px;top:368.3px;width:32px;height:15.4px;background:#fff;border:1px solid #8c8ea0;border-top:none;border-radius:0 0 3px 3px"></div>
<div class="t" style="left:514px;top:370.7px;font-size:9.7px;color:#222;letter-spacing:-0.56px;">Source</div>
<div class="a" style="left:544.5px;top:369px;width:56.8px;height:14px;background:#f7f7fc;border-right:1px solid #b4b6c6;border-top:1px solid #c8cad8;border-bottom:1px solid #c8cad8"></div>
<div class="t" style="left:547.5px;top:370.7px;font-size:9.7px;color:#222;letter-spacing:-0.56px;">Namespaces</div>
<div class="a" style="left:601.3px;top:369px;width:43px;height:14px;background:#f7f7fc;border-right:1px solid #b4b6c6;border-top:1px solid #c8cad8;border-bottom:1px solid #c8cad8"></div>
<div class="t" style="left:603.7px;top:370.7px;font-size:9.7px;color:#222;letter-spacing:-0.37px;">Overview</div>
<div class="a" style="left:644.3px;top:369px;width:29.3px;height:14px;background:#f7f7fc;border-right:1px solid #b4b6c6;border-top:1px solid #c8cad8;border-bottom:1px solid #c8cad8"></div>
<div class="t" style="left:647px;top:370.7px;font-size:9.7px;color:#222;letter-spacing:-0.50px;">beans</div>
<div class="a" style="left:673.6px;top:369px;width:35.8px;height:14px;background:#f7f7fc;border-right:1px solid #b4b6c6;border-top:1px solid #c8cad8;border-bottom:1px solid #c8cad8"></div>
<div class="t" style="left:676.4px;top:370.7px;font-size:9.7px;color:#222;letter-spacing:-0.16px;">context</div>
<div class="a" style="left:709.4px;top:369px;width:57.9px;height:14px;background:#f7f7fc;border-right:1px solid #b4b6c6;border-top:1px solid #c8cad8;border-bottom:1px solid #c8cad8"></div>
<div class="t" style="left:712.2px;top:370.7px;font-size:9.7px;color:#222;letter-spacing:-0.41px;">Beans Graph</div>
<div class="a" style="left:510px;top:388.8px;width:649.2px;height:17.7px;background:#cfdbef;border-radius:5px 5px 0 0"></div>
<div class="a" style="left:511.5px;top:389.3px;width:78.3px;height:17.4px;background:#fff;border-radius:4px 6px 0 0"></div>
<div class="a" style="left:510px;top:406.5px;width:649.2px;height:381.3px;background:#fff;border-right:1px solid #d2d4e6;border-bottom:1px solid #c3c5d4"></div>
<svg class="a" style="left:514.3px;top:393.6px" width="7.4" height="8.4" viewBox="0 0 7.4 8.4"><path d="M0.5 0.5 H5 L6.9 2.4 V7.9 H0.5Z" fill="#fff" stroke="#c9a24a" stroke-width="0.9"/><path d="M4.2 2.2 V5.4 C4.2 6.6 2.8 6.6 2.2 6" fill="none" stroke="#3a4a9a" stroke-width="1"/></svg>
<div class="t" style="left:524.6px;top:394px;font-size:9.7px;color:#222;letter-spacing:-0.32px;">*School.java</div>
<svg class="a" style="left:579.5px;top:395.4px" width="7" height="7" viewBox="0 0 7 7"><rect x="0.5" y="0.5" width="6" height="6" fill="none" stroke="#7a7a7a" stroke-width="0.7"/><path d="M0.5 0.5 L6.5 6.5 M6.5 0.5 L0.5 6.5" stroke="#7a7a7a" stroke-width="0.7"/></svg>
<div class="a" style="left:512px;top:406.5px;width:624px;height:364.7px;overflow:hidden;background:#fff">
<div class="a" style="left:33.6px;top:92.52px;width:590.4px;height:22.73px;background:#e8f2fe"></div>
<div class="a" style="left:0px;top:92.52px;width:7px;height:204.57px;background:#86bdd8;background-image:repeating-conic-gradient(#74b3d2 0 25%,#9dcbe0 0 50%);background-size:2.6px 2.6px"></div>
<div class="a" style="left:7.5px;top:47.06px;width:21px;height:22.73px;background:#eae8f2"></div>
<div class="a" style="left:7.5px;top:92.52px;width:26.1px;height:22.73px;background:#e9edf9"></div>
<div class="code ln" style="left:-2.329px;top:2.6px;width:29.529px;text-align:right">1</div>
<div class="code ln" style="left:-2.329px;top:25.33px;width:29.529px;text-align:right">2</div>
<div class="code ln" style="left:-2.329px;top:48.06px;width:29.529px;text-align:right">3</div>
<div class="code ln" style="left:-2.329px;top:70.79px;width:29.529px;text-align:right">4</div>
<div class="code ln" style="left:-2.329px;top:93.52px;width:29.529px;text-align:right">5</div>
<div class="code ln" style="left:-2.329px;top:116.25px;width:29.529px;text-align:right">6</div>
<div class="code ln" style="left:-2.329px;top:138.98px;width:29.529px;text-align:right">7</div>
<div class="code ln" style="left:-2.329px;top:161.71px;width:29.529px;text-align:right">8</div>
<div class="code ln" style="left:-2.329px;top:184.44px;width:29.529px;text-align:right">9</div>
<div class="code ln" style="left:-2.329px;top:207.17px;width:29.529px;text-align:right">10</div>
<div class="code ln" style="left:-2.329px;top:229.9px;width:29.529px;text-align:right">11</div>
<div class="code ln" style="left:-2.329px;top:252.63px;width:29.529px;text-align:right">12</div>
<div class="code ln" style="left:-2.329px;top:275.36px;width:29.529px;text-align:right">13</div>
<div class="code ln" style="left:-2.329px;top:298.09px;width:29.529px;text-align:right">14</div>
<svg class="a" style="left:27.5px;top:191.44px" width="6" height="6" viewBox="0 0 6 6"><circle cx="3" cy="3" r="2.4" fill="#fff" stroke="#9a9aa8" stroke-width="0.7"/><path d="M1.6 3 H4.4" stroke="#777" stroke-width="0.7"/></svg>
<div class="a" id="clip512" style="left:33.6px;top:0;width:590.4px;height:364.7px;overflow:hidden">
<div class="code" style="left:0.3px;top:2.6px"><span class="kw">package</span> anno07;</div>
<div class="code" style="left:0.3px;top:48.06px"><span class="kw">import</span> <span class="hl">org.springframework.stereotype.Component</span>;</div>
<div class="code" style="left:0.3px;top:93.52px"><span class="gy">@</span><span class="gy hl">Component</span><span class="bx">(</span>value-<span class="st">""</span><span class="cur">)</span><span class="grn"></span></div>
<div class="code" style="left:0.3px;top:116.25px"><span class="kw">public class </span><span class="rd">School</span> {</div>
<div class="code" style="left:0.3px;top:138.98px">    <span class="kw">public int </span><span class="bl">grade</span>;</div>
<div class="code" style="left:0.3px;top:184.44px">    <span class="gy">@Override</span></div>
<div class="code" style="left:0.3px;top:207.17px">    <span class="kw">public </span><span class="rd">String</span> toString() {</div>
<div class="code" style="left:0.3px;top:229.9px">        <span class="kw">return </span><span class="bl">grade</span> + <span class="st">"</span><span class="st ko">학년 입니다</span><span class="st">"</span>;</div>
<div class="code" style="left:0.3px;top:252.63px">    }</div>
<div class="code" style="left:0.3px;top:275.36px">}</div>
</div>
</div>
<div class="a" style="left:1136px;top:406.5px;width:13px;height:377.5px;background:#f1f1f5"></div>
<svg class="a" style="left:1139px;top:412.6px" width="7" height="5.4" viewBox="0 0 7 5.4"><path d="M0.6 4.2 L3.5 1.2 L6.4 4.2" fill="none" stroke="#b0b0b8" stroke-width="1.1"/></svg>
<svg class="a" style="left:1139.5px;top:761.4px" width="7" height="5.4" viewBox="0 0 7 5.4"><path d="M0.6 1.2 L3.5 4.2 L6.4 1.2" fill="none" stroke="#b0b0b8" stroke-width="1.1"/></svg>
<div class="a" style="left:1149px;top:406.5px;width:9.4px;height:377.5px;background:#fafafd"></div>
<div class="a" style="left:512px;top:771.2px;width:34px;height:12.8px;background:#faf9fb"></div>
<div class="a" style="left:546px;top:771.2px;width:603px;height:12.8px;background:#f1f1f4"></div>
<svg class="a" style="left:548.4px;top:774.2px" width="5.4" height="7" viewBox="0 0 5.4 7"><path d="M4.2 0.6 L1.2 3.5 L4.2 6.4" fill="none" stroke="#b0b0b8" stroke-width="1.1"/></svg>
<svg class="a" style="left:1126.6px;top:774.2px" width="5.4" height="7" viewBox="0 0 5.4 7"><path d="M1.2 0.6 L4.2 3.5 L1.2 6.4" fill="none" stroke="#b0b0b8" stroke-width="1.1"/></svg>
<div class="a" style="left:774.7px;top:788px;width:1px;height:14px;background:#bcbed0"></div>
<div class="a" style="left:848.4px;top:788px;width:1px;height:14px;background:#bcbed0"></div>
<div class="a" style="left:917.2px;top:788px;width:1px;height:14px;background:#bcbed0"></div>
<svg class="a" style="left:984.5px;top:789px" width="1.4" height="13" viewBox="0 0 1.4 13"><path d="M0.7 0 V13" stroke="#9a9db5" stroke-width="1.2" stroke-dasharray="1.1 1.6"/></svg>
<div class="t" style="left:779.6px;top:790.4px;font-size:9.7px;color:#222;letter-spacing:-0.05px;">Writable</div>
<div class="t" style="left:853px;top:790.4px;font-size:9.7px;color:#222;letter-spacing:-0.28px;">Smart Insert</div>
<div class="t" style="left:922.2px;top:790.4px;font-size:9.7px;color:#222;letter-spacing:-0.33px;">5 : 20</div>
<div class="a" style="left:1162px;top:219px;width:19.5px;height:62px;background:#e8eaf8;border-left:1px solid #f8f9fd;border-bottom:1px solid #f8f9fd;border-radius:0 0 4px 4px;box-shadow:-0.5px 0.5px 0 #c4c7dc"></div>
<svg class="a" style="left:1166.5px;top:222px" width="11" height="2" viewBox="0 0 11 2"><path d="M0 1 H11" stroke="#8e93ad" stroke-width="1.1" stroke-dasharray="1.1 2"/></svg>
<svg class="a" style="left:1168.6px;top:228.6px" width="7" height="6" viewBox="0 0 7 6"><rect x="0.5" y="2.2" width="4.4" height="3" fill="#fff" stroke="#555" stroke-width="0.9"/><path d="M2 1 H6.4" stroke="#555" stroke-width="1.3"/></svg>
<svg class="a" style="left:1168px;top:240px" width="8" height="8" viewBox="0 0 8 8"><rect x="0.6" y="0.6" width="6.8" height="4.8" fill="#eaf1fb" stroke="#2b4f94" stroke-width="1.1"/><path d="M2 2.4 H4" stroke="#2b4f94" stroke-width="0.8"/><rect x="2" y="6.4" width="4" height="1.2" fill="#2b4f94"/></svg>
<svg class="a" style="left:1167.6px;top:255px" width="9" height="8" viewBox="0 0 9 8"><rect x="0.4" y="0.6" width="4.4" height="2.4" fill="#5a9a3a"/><rect x="4.2" y="3.6" width="4" height="3.6" fill="#fff" stroke="#3f8f3f" stroke-width="1"/><path d="M4.8 1.8 H7 V3.6" stroke="#3f8f3f" stroke-width="0.8" fill="none"/></svg>
<svg class="a" style="left:1167.6px;top:267px" width="8.4" height="8.6" viewBox="0 0 8.4 8.6"><rect x="0.5" y="0.5" width="7.4" height="7.6" fill="#f1f1f6" stroke="#8a8ea6" stroke-width="0.8"/><circle cx="4.2" cy="2.6" r="1.7" fill="#d8301e"/><rect x="2.4" y="4.8" width="3.6" height="2.6" fill="#e8a030"/></svg>
<svg class="a" style="left:1146px;top:221.4px" width="12" height="5" viewBox="0 0 12 5"><rect x="0.5" y="1" width="4" height="2" fill="none" stroke="#c5c7d8" stroke-width="0.8"/><rect x="7.5" y="0.5" width="4" height="4" fill="none" stroke="#c5c7d8" stroke-width="0.8"/></svg>
<svg class="a" style="left:512.6px;top:619.6px" width="5.6" height="5.2" viewBox="0 0 5.6 5.2"><path d="M2.8 0.2 L5.4 5 H0.2Z" fill="#3f9a4a"/></svg>
</div>
<!--ECL-END-->

<!-- TASKBAR -->
<!--TASK-START-->
<div id="task" class="a" style="left:0;top:0;width:1182px;height:865px;overflow:hidden;pointer-events:none">
<div class="a" style="left:1px;top:803.7px;width:1181px;height:23.4px;background:linear-gradient(90deg,#1d1d21 0,#1e1d21 17%,#33222a 23%,#44282c 38%,#3c2428 46%,#2a2024 52%,#1e1e22 58%,#1d1d21 100%)"></div>
<svg class="a" style="left:7.8px;top:809px" width="13.4" height="12.4" viewBox="0 0 13.4 12.4"><path d="M0 1.8 L5.6 1 V6 H0Z M6.4 0.9 L13.4 0 V6 H6.4Z M0 6.8 H5.6 V11.6 L0 10.8Z M6.4 6.8 H13.4 V12.4 L6.4 11.5Z" fill="#fff"/></svg>
<svg class="a" style="left:35.6px;top:808.6px" width="13.4" height="13.4" viewBox="0 0 13.4 13.4"><circle cx="8.4" cy="5" r="4.1" fill="none" stroke="#fff" stroke-width="1.3"/><path d="M5.4 8 L0.6 12.8" stroke="#fff" stroke-width="1.4"/></svg>
<svg class="a" style="left:63.6px;top:808.8px" width="12.8" height="12.8" viewBox="0 0 12.8 12.8"><circle cx="6.4" cy="6.4" r="5.3" fill="none" stroke="#fff" stroke-width="1.7"/></svg>
<svg class="a" style="left:90.6px;top:808.8px" width="13.6" height="12.6" viewBox="0 0 13.6 12.6"><rect x="1.8" y="2.6" width="7.2" height="7.2" fill="none" stroke="#fff" stroke-width="1.3"/><path d="M0.7 0.6 V12 M10.2 0.6 V12 M13 0.6 V4.6 M13 8 V12" stroke="#fff" stroke-width="1.1"/><rect x="12.2" y="5.6" width="1.4" height="1.4" fill="#fff"/></svg>
<svg class="a" style="left:120.8px;top:808.4px" width="13" height="13.2" viewBox="0 0 13 13.2"><path d="M0.6 4 H12.4 V13 H0.6Z" fill="#f4f4f4"/><path d="M4 4 V2.6 C4 0.2 9 0.2 9 2.6 V4" fill="none" stroke="#f4f4f4" stroke-width="1.2"/><rect x="4" y="6" width="2.2" height="2.2" fill="#f25022"/><rect x="6.8" y="6" width="2.2" height="2.2" fill="#7fba00"/><rect x="4" y="8.8" width="2.2" height="2.2" fill="#00a4ef"/><rect x="6.8" y="8.8" width="2.2" height="2.2" fill="#ffb900"/></svg>
<svg class="a" style="left:149.2px;top:808.6px" width="13.2" height="13.2" viewBox="0 0 13.2 13.2"><circle cx="6.6" cy="6.6" r="6.4" fill="#1b74c9"/><path d="M1 4.6 C3 0.2 10.6 -0.4 12.8 5 C12.4 8 10 8.6 7.6 8 C9 6.6 7.6 4.6 5.6 5.2 C3.6 5.8 3.6 8.8 5.4 10.6 C2 10.6 -0.4 7.6 1 4.6Z" fill="#3fd68a" opacity="0.9"/><path d="M5.6 5.2 C3.6 5.8 3.4 9.6 6.6 11.4 C8.6 12.4 11 11.6 12.2 9.6 C10 10.8 7 10 6.6 7.8 C6.4 6.6 7 5.6 7.6 5.4Z" fill="#0f4f9e"/></svg>
<svg class="a" style="left:178px;top:808.8px" width="12.4" height="12.6" viewBox="0 0 12.4 12.6"><path d="M0 1.6 H4.4 L5.6 3 H12.4 V11.6 H0Z" fill="#f5b92e"/><path d="M0 4.4 H12.4 V11.6 H0Z" fill="#fcd669"/><rect x="3" y="6.8" width="6.4" height="4.8" fill="#3b8ede"/><rect x="4.4" y="9" width="3.6" height="2.6" fill="#fcd669"/></svg>
<div class="a" style="left:206.2px;top:809.2px;width:12.6px;height:12.2px;background:#a20f17"></div>
<div class="t" style="left:207.2px;top:810.6px;font-size:10px;color:#fff;font-weight:bold;letter-spacing:-0.53px;">64</div>
<svg class="a" style="left:235.6px;top:809.6px" width="10.4" height="10.4" viewBox="0 0 10.4 10.4"><circle cx="5.2" cy="5.2" r="3.1" fill="none" stroke="#fff" stroke-width="2"/><path d="M5.2 0 V10.4 M0 5.2 H10.4 M1.5 1.5 L8.9 8.9 M8.9 1.5 L1.5 8.9" stroke="#fff" stroke-width="1.7"/><circle cx="5.2" cy="5.2" r="3.2" fill="#fff"/><circle cx="5.2" cy="5.2" r="1.7" fill="#33222a"/></svg>
<svg class="a" style="left:263.2px;top:810.6px" width="11.6" height="9" viewBox="0 0 11.6 9"><rect x="0" y="0" width="11.6" height="9" fill="#3c9be0"/><rect x="0.8" y="1" width="5" height="7" fill="#bfe3fa"/><circle cx="3.2" cy="4" r="1.6" fill="#e8b730"/><path d="M7 1.4 V7.6 M9 1.4 V7.6" stroke="#e6f4ff" stroke-width="1.1"/></svg>
<svg class="a" style="left:291px;top:808.8px" width="12.8" height="12.8" viewBox="0 0 12.8 12.8"><circle cx="6.4" cy="6.4" r="6" fill="#0a0a0c" stroke="#c9d2d8" stroke-width="0.8"/><circle cx="6.4" cy="5.2" r="2.5" fill="#fff"/><rect x="5.4" y="7" width="2" height="3" fill="#fff"/><circle cx="6.4" cy="5.4" r="0.9" fill="#0a0a0c"/></svg>
<svg class="a" style="left:319.4px;top:809px" width="12.6" height="12.4" viewBox="0 0 12.6 12.4"><rect x="3.4" y="0.6" width="9.2" height="11.2" rx="0.8" fill="#21a366"/><rect x="8" y="0.6" width="4.6" height="5.6" fill="#33c481"/><rect x="8" y="6.2" width="4.6" height="5.6" fill="#107c41"/><rect x="0" y="2.8" width="7.2" height="7" rx="0.6" fill="#0e6e38"/><path d="M2 4.4 L5.2 8.2 M5.2 4.4 L2 8.2" stroke="#fff" stroke-width="1.1"/></svg>
<svg class="a" style="left:348px;top:809px" width="12.2" height="12.4" viewBox="0 0 12.2 12.4"><rect width="12.2" height="12.4" fill="#f2c811"/><rect x="2" y="3" width="8.2" height="6" fill="none" stroke="#222" stroke-width="0.9"/><path d="M4 8 V6.4 M6 8 V5 M8 8 V5.8" stroke="#222" stroke-width="1.1"/></svg>
<svg class="a" style="left:376.2px;top:809.4px" width="11.8" height="11.8" viewBox="0 0 11.8 11.8"><path d="M2.6 0.4 L11.2 1.6 L9 11.4 L0.4 9.6Z" fill="#a9c6dc"/><path d="M2.6 0.4 L11.2 1.6 L10.8 3.2 L2.2 2Z" fill="#5a7a96"/><path d="M0.4 9.6 L9 11.4 L8.4 10 L1 8.6Z" fill="#dfe8ef"/></svg>
<div class="a" style="left:396.9px;top:803.7px;width:28.1px;height:23.4px;background:#5b474b"></div>
<svg class="a" style="left:403.8px;top:808.6px" width="13.2" height="13.2" viewBox="0 0 13.2 13.2"><circle cx="6.6" cy="6.6" r="6.4" fill="#6db33f"/><path d="M2.6 9.4 C2.6 5.4 6 3.4 11 3.2 C11 7.6 8.2 10.4 3.8 10Z" fill="#fff"/><path d="M2.8 10.2 C4.6 8 6.6 6.4 9.4 5.2" stroke="#6db33f" stroke-width="0.9" fill="none"/></svg>
<svg class="a" style="left:433px;top:809px" width="11.8" height="12.4" viewBox="0 0 11.8 12.4"><path d="M1 8 L6.4 0.6 L10.6 2.4 L5 9.6Z" fill="#e8636a"/><path d="M1 8 L5 9.6 L2.4 11Z" fill="#c7ccd4"/><path d="M4 8.4 L7.6 9 L6.2 12 L3 10.8Z" fill="#3f9a4a"/><path d="M7.6 8.4 L10.4 8.4 L9 11Z" fill="#e6c230"/></svg>
<svg class="a" style="left:460.8px;top:808.8px" width="12.4" height="12.4" viewBox="0 0 12.4 12.4"><rect width="12.4" height="12.4" rx="3.4" fill="#4087f2"/><rect x="2.4" y="4" width="5.6" height="4.4" rx="1" fill="#fff"/><path d="M8.4 5.4 L10.2 4.2 V8.2 L8.4 7Z" fill="#fff"/></svg>
<div class="a" style="left:145.2px;top:825.2px;width:21.6px;height:1.9px;background:#78b9ec"></div>
<div class="a" style="left:173.8px;top:825.2px;width:21.6px;height:1.9px;background:#78b9ec"></div>
<div class="a" style="left:396.9px;top:825.2px;width:28.1px;height:1.9px;background:#78b9ec"></div>
<div class="a" style="left:428.3px;top:825.2px;width:21.7px;height:1.9px;background:#78b9ec"></div>
<div class="a" style="left:456.8px;top:825.2px;width:21.4px;height:1.9px;background:#78b9ec"></div>
<svg class="a" style="left:927.6px;top:812.2px" width="10.8" height="6.4" viewBox="0 0 10.8 6.4"><path d="M0.6 5.8 L5.4 1 L10.2 5.8" fill="none" stroke="#fff" stroke-width="1.2"/></svg>
<svg class="a" style="left:951.4px;top:811.4px" width="12.6" height="7.6" viewBox="0 0 12.6 7.6"><rect x="1.6" y="1.4" width="10.4" height="5" rx="0.6" fill="#fff"/><rect x="0" y="0.4" width="2.6" height="2" fill="#fff"/><path d="M11 2 V5.8" stroke="#999" stroke-width="0.8"/></svg>
<svg class="a" style="left:977.4px;top:810.4px" width="10" height="9.6" viewBox="0 0 10 9.6"><path d="M0.8 9 A8.2 8.2 0 0 1 9 0.8" fill="none" stroke="#bdbdbd" stroke-width="1"/><path d="M3.2 9 A5.8 5.8 0 0 1 9 3.2" fill="none" stroke="#bdbdbd" stroke-width="1"/><path d="M5.6 9 A3.4 3.4 0 0 1 9 5.6" fill="none" stroke="#bdbdbd" stroke-width="1"/><rect x="7.6" y="7.6" width="1.6" height="1.6" fill="#bdbdbd"/></svg>
<svg class="a" style="left:999.8px;top:810.4px" width="12.8" height="9.6" viewBox="0 0 12.8 9.6"><path d="M0.6 3.2 H3 L6 0.6 V9 L3 6.4 H0.6Z" fill="none" stroke="#fff" stroke-width="1"/><path d="M7.8 3 A2.6 2.6 0 0 1 7.8 6.6" fill="none" stroke="#fff" stroke-width="0.9"/><path d="M9.6 1.6 A4.8 4.8 0 0 1 9.6 8" fill="none" stroke="#aaa" stroke-width="0.9"/></svg>
<svg class="a" style="left:1024.6px;top:809.8px" width="13.6" height="11" viewBox="0 0 13.6 11"><path d="M2.6 10 C0.6 10 0.2 7.6 1.8 6.4 C3.4 5.2 4.4 8.2 3.4 9.4 M3.2 9.6 L8.4 1.6 C9.4 0.2 11 1 10.2 2.6 L6.6 8.4 M8 5 C10 3.6 12.6 4 12.8 5.6" fill="none" stroke="#fff" stroke-width="1.1"/></svg>
<div class="t" style="left:1046.4px;top:809px;font-size:15.8px;color:#fff;letter-spacing:0.05px;">A</div>
<div class="a" style="left:1068.7px;top:810px;width:11.2px;height:11px;background:#fff"></div>
<div class="t" style="left:1069.4px;top:810.6px;font-size:9.8px;color:#111;font-weight:bold;letter-spacing:0.78px;">한</div>
<div class="t" style="left:1096.3px;top:810.6px;font-size:9.6px;color:#fff;letter-spacing:-0.30px;">오후 9:33</div>
<svg class="a" style="left:1150.3px;top:809.1px" width="12.8" height="12.2" viewBox="0 0 12.8 12.2"><path d="M0.4 0.4 H12.4 V9.6 H8 L6.4 11.6 L4.8 9.6 H0.4Z" fill="#fff"/><path d="M2.4 2.8 H10.4 M2.4 5 H10.4 M2.4 7.2 H7.4" stroke="#1d1d21" stroke-width="1"/></svg>
<div class="a" style="left:1178px;top:806px;width:1px;height:19px;background:#5a5a5e"></div>
</div>
<!--TASK-END-->

<!-- RIGHT PANEL -->
<!--PANEL-START-->
<div id="panel" class="a" style="left:0;top:0;width:1503px;height:865px;overflow:hidden">
<div class="a" style="left:1182px;top:31px;width:320px;height:833px;background:#fff"></div>
<svg class="a" style="left:1201.5px;top:51px" width="10" height="6" viewBox="0 0 10 6"><path d="M1 1 L5 5 L9 1" fill="none" stroke="#555" stroke-width="1.5"/></svg>
<div class="t" style="left:1311.6px;top:45.6px;font-size:13.4px;color:#222;font-weight:500;letter-spacing:0.13px;">참가자<b>(32)</b></div>
<div class="a" style="left:1205.5px;top:81.5px;width:275px;height:24px;background:#f2f2f7;border-radius:8px"></div>
<div class="a" style="left:1343.5px;top:82.5px;width:136px;height:22px;background:#fff;border-radius:7px;box-shadow:0 0 1px rgba(0,0,0,.12)"></div>
<div class="t" style="left:1250.5px;top:88px;font-size:12px;color:#444;letter-spacing:-0.36px;">토론자<b>(4)</b></div>
<div class="t" style="left:1384.8px;top:88px;font-size:12px;color:#0e71eb;font-weight:bold;letter-spacing:-0.44px;">참석자<b>(28)</b></div>
<div class="a" style="left:1210.5px;top:149.7px;width:26px;height:26px;background:#f09a15;border-radius:7px"></div>
<div class="t" style="left:1216.7px;top:156.2px;font-size:13.4px;color:#fff;font-weight:bold;letter-spacing:1.27px;">김</div>
<div class="a" style="left:1210.5px;top:190.7px;width:26px;height:26px;background:#1a9b7d;border-radius:7px"></div>
<div class="t" style="left:1216.7px;top:197.2px;font-size:13.4px;color:#fff;font-weight:bold;letter-spacing:1.27px;">김</div>
<div class="a" style="left:1210.5px;top:231.7px;width:26px;height:26px;background:#1a9b7d;border-radius:7px"></div>
<div class="t" style="left:1216.7px;top:238.2px;font-size:13.4px;color:#fff;font-weight:bold;letter-spacing:1.27px;">김</div>
<div class="a" style="left:1210.5px;top:272.7px;width:26px;height:26px;background:#f09a15;border-radius:7px"></div>
<div class="t" style="left:1216.7px;top:279.2px;font-size:13.4px;color:#fff;font-weight:bold;letter-spacing:1.27px;">김</div>
<div class="a" style="left:1210.5px;top:313.7px;width:26px;height:26px;background:#33455c;border-radius:7px"></div>
<div class="t" style="left:1216.7px;top:320.2px;font-size:13.4px;color:#fff;font-weight:bold;letter-spacing:1.27px;">김</div>
<div class="a" style="left:1210.5px;top:354.7px;width:26px;height:26px;background:#33455c;border-radius:7px"></div>
<div class="t" style="left:1216.7px;top:361.2px;font-size:13.4px;color:#fff;font-weight:bold;letter-spacing:1.27px;">김</div>
<div class="a" style="left:1182px;top:120px;width:320px;height:38px;background:#fff"></div>
<div class="a" style="left:1201px;top:126px;width:286px;height:32px;border:1px solid #a9a9b2;border-radius:8px;background:#fff"></div>
<div class="a" style="left:1242px;top:156px;width:71.5px;height:4px;background:#fff"></div>
<svg class="a" style="left:1213px;top:136px" width="12" height="12.4" viewBox="0 0 12 12.4"><circle cx="5" cy="5" r="4" fill="none" stroke="#666" stroke-width="1.2"/><path d="M8 8 L11.2 11.4" stroke="#666" stroke-width="1.3"/></svg>
<div class="t" style="left:1230.4px;top:133.4px;font-size:13px;color:#777;letter-spacing:-0.32px;">검색</div>
<div class="a" style="left:1492.6px;top:160px;width:7.6px;height:232px;background:#f3f3f7;border-radius:4px"></div>
<div class="a" style="left:1493.4px;top:182.5px;width:6px;height:54.5px;background:#9c9ca8;border-radius:3px"></div>
<div class="a" style="left:1296.5px;top:410.8px;width:92.5px;height:21.6px;background:#f1f1f6;border-radius:6px"></div>
<div class="t" style="left:1303px;top:414.6px;font-size:13px;color:#b6b6c2;letter-spacing:-0.21px;">모든 손 내리기</div>
<div class="a" style="left:1203px;top:447px;width:300px;height:1px;background:#ececf0"></div>
<svg class="a" style="left:1201.5px;top:467px" width="10" height="6" viewBox="0 0 10 6"><path d="M1 1 L5 5 L9 1" fill="none" stroke="#555" stroke-width="1.5"/></svg>
<div class="t" style="left:1329px;top:461.6px;font-size:13.4px;color:#222;font-weight:bold;letter-spacing:0.86px;">채팅</div>
<div class="t" style="left:1201.6px;top:501.7px;font-size:13.3px;color:#222;letter-spacing:1.18px;">기 바랍니다!!</div>
<div class="t" style="left:1201.6px;top:537.1px;font-size:11.9px;color:#666;letter-spacing:0.65px;">나로부터 에게 <span style="color:#0e71eb">모든 토론자 및 참석자:</span></div>
<div class="t" style="left:1201.5px;top:557.3px;font-size:13.3px;color:#222;letter-spacing:0.35px;">annotation03, 04</div>
<div class="t" style="left:1307px;top:557.3px;font-size:13.3px;color:#222;letter-spacing:1.73px;">쉬는시간동안에 해보시</div>
<div class="t" style="left:1201.6px;top:581.8px;font-size:13.3px;color:#222;letter-spacing:1.41px;">기 바랍니다!</div>
<div class="t" style="left:1201.6px;top:617.2px;font-size:11.9px;color:#666;letter-spacing:0.65px;">나로부터 에게 <span style="color:#0e71eb">모든 토론자 및 참석자:</span></div>
<div class="t" style="left:1201.6px;top:636.9px;font-size:13.3px;color:#222;letter-spacing:1.46px;">메인은 복붙하시기 바랍니다!</div>
<div class="t" style="left:1201.7px;top:662.9px;font-size:13.3px;color:#222;letter-spacing:0.43px;">Ctrl+Shift+O :</div>
<div class="t" style="left:1293.3px;top:662.9px;font-size:13.3px;color:#222;letter-spacing:1.29px;">필요한 라이브러리</div>
<div class="t" style="left:1410.6px;top:662.9px;font-size:13.3px;color:#222;letter-spacing:-0.07px;">import</div>
<div class="t" style="left:1201.6px;top:687.4px;font-size:13.3px;color:#222;letter-spacing:1.59px;">시켜준다.</div>
<div class="t" style="left:1201.7px;top:713px;font-size:13.3px;color:#222;letter-spacing:-0.24px;">namespace</div>
<div class="t" style="left:1270px;top:713px;font-size:13.3px;color:#222;letter-spacing:1.53px;">에서</div>
<div class="t" style="left:1301.4px;top:713px;font-size:13.3px;color:#222;letter-spacing:-0.36px;">c</div>
<div class="t" style="left:1308.6px;top:713px;font-size:13.3px;color:#222;letter-spacing:1.36px;">를 추가하시기 바랍니</div>
<div class="t" style="left:1201.6px;top:736.6px;font-size:13.3px;color:#222;letter-spacing:0.27px;">다</div>
<div class="a" style="left:1492px;top:494px;width:7.6px;height:275px;background:#f3f3f7;border-radius:4px"></div>
<div class="a" style="left:1492.6px;top:742.2px;width:6.6px;height:26.2px;background:#9c9ca8;border-radius:3px"></div>
<div class="a" style="left:1182px;top:770.3px;width:320px;height:1px;background:#ececf0"></div>
<div class="t" style="left:1199.7px;top:787px;font-size:13px;color:#333;letter-spacing:-0.42px;">받는 사람:</div>
<div class="a" style="left:1262.2px;top:782.9px;width:134.6px;height:22.6px;background:#f3f3f7;border-radius:6px"></div>
<div class="t" style="left:1269.6px;top:787.2px;font-size:12.8px;color:#222;letter-spacing:-0.91px;">모든 토론자 및 참석자</div>
<svg class="a" style="left:1380.6px;top:791.4px" width="8.6" height="5.6" viewBox="0 0 8.6 5.6"><path d="M1 1 L4.3 4.3 L7.6 1" fill="none" stroke="#222" stroke-width="1.5"/></svg>
<div class="a" style="left:1463.3px;top:782px;width:23.4px;height:23.6px;border:1px solid #dcdce4;border-radius:6px;background:#fff"></div>
<div class="a" style="left:1470.4px;top:793.2px;width:1.7px;height:1.7px;background:#777;border-radius:1px"></div>
<div class="a" style="left:1474px;top:793.2px;width:1.7px;height:1.7px;background:#777;border-radius:1px"></div>
<div class="a" style="left:1477.6px;top:793.2px;width:1.7px;height:1.7px;background:#777;border-radius:1px"></div>
<div class="t" style="left:1199.7px;top:812.8px;font-size:13px;color:#8a8a94;letter-spacing:0.52px;">여기에 메시지 입력...</div>
</div>
<!--PANEL-END-->
</body>
</html>
